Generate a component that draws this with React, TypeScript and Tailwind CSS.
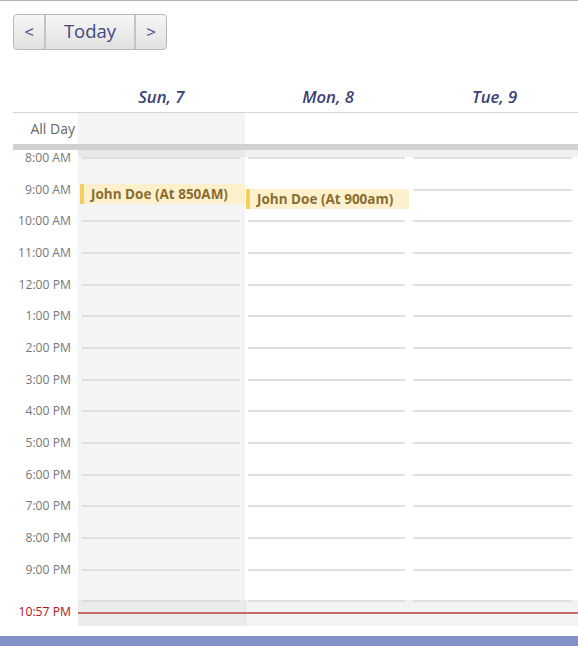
import React from "react";

const hours = [
  "8:00 AM",
  "9:00 AM",
  "10:00 AM",
  "11:00 AM",
  "12:00 PM",
  "1:00 PM",
  "2:00 PM",
  "3:00 PM",
  "4:00 PM",
  "5:00 PM",
  "6:00 PM",
  "7:00 PM",
  "8:00 PM",
  "9:00 PM",
];

function HourRow({ label }: { label: string }) {
  return (
    <div className="grid grid-cols-[65px_1fr_1fr_1fr] h-[31.667px]">
      <div className="flex justify-end pr-[7px]">
        <span className="text-[12.2px] leading-[16px] text-[#777] -translate-y-[7px] whitespace-nowrap">
          {label}
        </span>
      </div>
      <div className="bg-[#f4f4f4]">
        <div className="h-[2px] bg-[#dfdfdf] ml-[4px] mr-[5px]" />
      </div>
      <div>
        <div className="h-[2px] bg-[#e0e0e0] ml-[3px] mr-[6px]" />
      </div>
      <div>
        <div className="h-[2px] bg-[#e0e0e0] ml-[2px] mr-[6px]" />
      </div>
    </div>
  );
}

export default function App() {
  return (
    <div className="w-[578px] h-[646px] overflow-hidden bg-white border-t border-[#b4b4b4] flex flex-col font-['Open_Sans',sans-serif]">
      {/* toolbar */}
      <div className="mt-[13px] ml-[13px] flex">
        <div className="flex h-[36px] rounded-[4px] border border-[#b9b9b9] bg-gradient-to-b from-[#f6f6f6] to-[#e1e1e1] text-[#3e4a82] overflow-hidden">
          <div className="w-[30px] flex items-center justify-center text-[17px] leading-none pb-[2px]">
            &lt;
          </div>
          <div className="w-[92px] flex items-center justify-center text-[18.5px] leading-none border-l-2 border-r-2 border-[#c4c4c4] pb-[1px]">
            Today
          </div>
          <div className="w-[30px] flex items-center justify-center text-[17px] leading-none pb-[2px]">
            &gt;
          </div>
        </div>
      </div>

      {/* day header */}
      <div className="mt-[30px] ml-[13px] grid grid-cols-[65px_1fr_1fr_1fr] h-[33px] border-b border-[#d4d4d4]">
        <div />
        {["Sun, 7", "Mon, 8", "Tue, 9"].map((d) => (
          <div
            key={d}
            className="flex items-center justify-center pt-[2px] italic font-semibold text-[16.7px] text-[#3b4275]"
          >
            {d}
          </div>
        ))}
      </div>

      {/* all day */}
      <div className="ml-[13px] grid grid-cols-[65px_1fr_1fr_1fr] h-[31px]">
        <div className="flex items-center justify-end pr-[3px] text-[14px] text-[#666]">
          All Day
        </div>
        <div className="bg-[#f4f4f4]" />
        <div />
        <div />
      </div>

      {/* bar */}
      <div className="ml-[13px] h-[6px] bg-[#d1d1d1]" />

      {/* shaded strip */}
      <div className="ml-[13px] grid grid-cols-[65px_1fr_1fr_1fr] h-[7px]">
        <div />
        <div className="bg-[#e9e9e9]" />
        <div className="bg-[#f1f1f1]" />
        <div className="bg-[#f1f1f1]" />
      </div>

      {/* hour rows */}
      <div className="ml-[13px] relative">
        {hours.map((h) => (
          <HourRow key={h} label={h} />
        ))}

        {/* events */}
        <div className="absolute left-[67px] top-[27px] w-[165px] h-[20px] bg-[#fdf1cd] border-l-4 border-[#f6cd5f] flex items-center pl-[7px]">
          <span className="text-[13.5px] font-bold text-[#8a6c2f] whitespace-nowrap">
            John Doe (At 850AM)
          </span>
        </div>
        <div className="absolute left-[233px] top-[32px] w-[163px] h-[20px] bg-[#fdf1cd] border-l-4 border-[#f6cd5f] flex items-center pl-[7px]">
          <span className="text-[13.5px] font-bold text-[#8a6c2f] whitespace-nowrap">
            John Doe (At 900am)
          </span>
        </div>
      </div>

      {/* current-hour band */}
      <div className="ml-[13px] relative grid grid-cols-[65px_1fr_1fr_1fr] h-[25.667px]">
        <div className="flex justify-end pr-[7px] pt-[4px]">
          <span className="text-[12.2px] leading-[16px] text-[#b3121c] whitespace-nowrap">
            10:57 PM
          </span>
        </div>
        <div className="bg-[#ebebeb]">
          <div className="h-[2px] bg-[#dcdcdc] ml-[4px] mr-[5px]" />
        </div>
        <div className="bg-[#f3f3f3] border-l border-[#e2e2e2]">
          <div className="h-[2px] bg-[#e0e0e0] ml-[2px] mr-[6px]" />
        </div>
        <div className="bg-[#f3f3f3]">
          <div className="h-[2px] bg-[#e0e0e0] ml-[2px] mr-[6px]" />
        </div>
        <div className="absolute left-[65px] right-0 top-[12px] h-[2px] bg-[#c96a6a]" />
      </div>

      <div className="h-[10px]" />
      <div className="h-[10px] bg-[#8490c8]" />
    </div>
  );
}
